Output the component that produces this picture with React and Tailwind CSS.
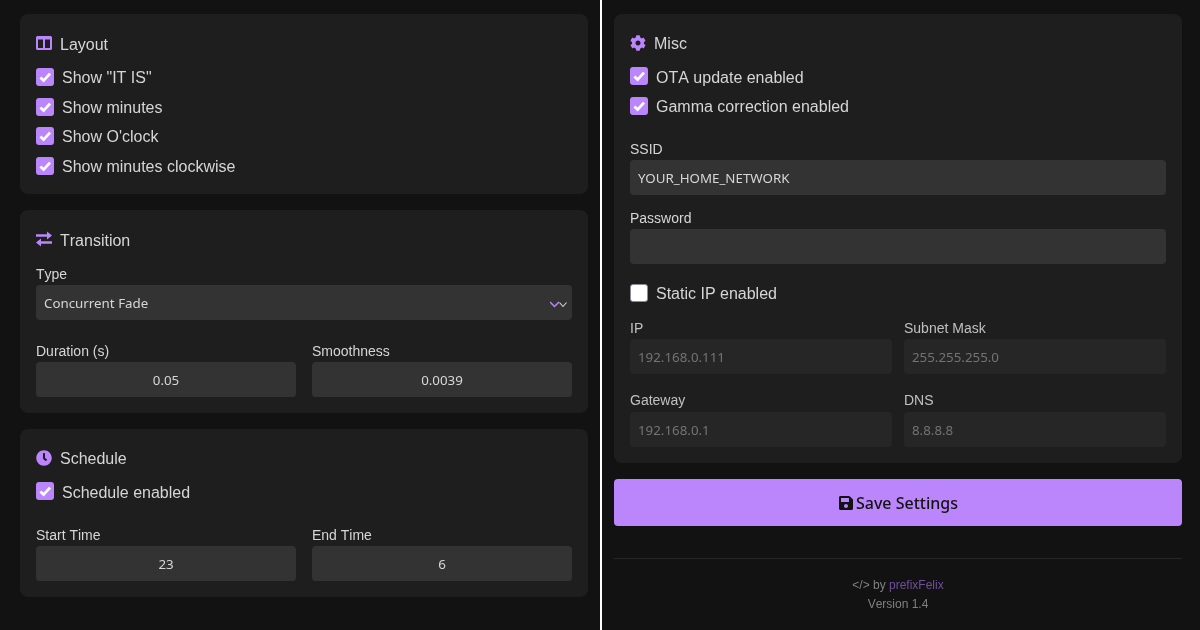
import { FaClock, FaCog, FaSave } from "react-icons/fa";

const LayoutIcon = () => (
  <svg width="16" height="14" viewBox="0 0 16 14" fill="currentColor" className="-mt-[2px]">
    <path
      fillRule="evenodd"
      d="M1.500 0h13A1.500 1.500 0 0 1 16 1.500v11a1.500 1.500 0 0 1-1.500 1.500h-13A1.500 1.500 0 0 1 0 12.500v-11A1.500 1.500 0 0 1 1.500 0ZM2 3.500V12h5V3.500ZM9 3.500V12h5V3.500Z"
    />
  </svg>
);

const SwapIcon = () => (
  <svg width="16" height="16" viewBox="0 0 16 16" fill="currentColor" className="-mt-[2px]">
    <path d="M0 3.200h11V0.400L16 4.500l-5 4.100V5.800H0ZM16 10.200H5V7.400L0 11.500l5 4.100v-2.800h11Z" />
  </svg>
);

const Checkbox = ({ checked = true, label, className = "" }) => (
  <label className={`flex items-center h-[18px] ${className}`}>
    <span
      className={`w-[18px] h-[18px] rounded-[3px] flex items-center justify-center shrink-0 ${
        checked ? "bg-[#bb86fc]" : "bg-white border border-[#8f8a99]"
      }`}
    >
      {checked && (
        <svg width="18" height="18" viewBox="0 0 18 18" fill="none" className="shrink-0">
          <path d="M4.400 9.600 7.600 12.600 14 5.600" stroke="#fff" strokeWidth="2.800" />
        </svg>
      )}
    </span>
    <span className="ml-2 pt-[2.5px] text-base text-[#d6d6d6]">{label}</span>
  </label>
);

const Title = ({ icon, children, className = "" }) => (
  <div className={`flex items-center h-7 text-base text-[#d6d6d6] ${className}`}>
    <span className="w-4 flex justify-center text-[#bb86fc]">{icon}</span>
    <span className="ml-2 pt-[2px]">{children}</span>
  </div>
);

const Field = ({ label, value, center, disabled, className = "", labelClass = "mb-[2px]" }) => (
  <div className={className}>
    <div
      className={`h-[18px] text-sm leading-[18px] ${labelClass} ${
        disabled ? "text-[#c0c0c0]" : "text-[#d6d6d6]"
      }`}
    >
      {label}
    </div>
    <input
      readOnly
      value={value}
      className={`block w-full h-[35px] px-2 rounded-[4px] text-[13.33px] font-['Noto_Sans',sans-serif] [font-kerning:normal] outline-none ${
        center ? "text-center pt-[1px]" : "pt-[2px]"
      } ${disabled ? "bg-[#262626] text-[#737373]" : "bg-[#333333] text-[#d6d6d6]"}`}
    />
  </div>
);

const Card = ({ children }) => (
  <section className="bg-[#1e1e1e] rounded-lg px-4 pb-4 pt-4 mb-4 [will-change:transform]">{children}</section>
);

export default function App() {
  return (
    <div className="w-[1200px] h-[630px] overflow-hidden flex bg-[#121212] font-['Liberation_Sans',sans-serif] [font-kerning:none]">
      <div className="w-[600px] pl-5 pr-3 pt-[14px]">
        <Card>
          <Title icon={<LayoutIcon />}>Layout</Title>
          <div className="mt-[10px] flex flex-col gap-[11.6px] pb-[3px]">
            <Checkbox label={'Show "IT IS"'} />
            <Checkbox label="Show minutes" />
            <Checkbox label="Show O'clock" />
            <Checkbox label="Show minutes clockwise" />
          </div>
        </Card>

        <Card>
          <Title icon={<SwapIcon />}>Transition</Title>
          <div className="mt-[11px]">
            <div className="h-[18px] mb-[2px] text-sm leading-[18px] text-[#d6d6d6]">Type</div>
            <div className="h-[35px] px-2 rounded-[4px] bg-[#333333] flex items-center justify-between text-[13.33px] text-[#d6d6d6] font-['Noto_Sans',sans-serif] [font-kerning:normal]">
              <span className="pt-[3px]">Concurrent Fade</span>
              <svg width="17" height="7" viewBox="0 0 17 7" fill="none" className="-mr-[3px] mt-[3px]">
                <path d="M9.500 1.500 13 5.500l3.500-4" stroke="#d6d6d6" strokeWidth="1.100" />
                <path d="M0 1 4.500 5.500 9 1" stroke="#bb86fc" strokeWidth="1.500" />
              </svg>
            </div>
          </div>
          <div className="mt-[22px] grid grid-cols-2 gap-4">
            <Field label="Duration (s)" value="0.05" center />
            <Field label="Smoothness" value="0.0039" center />
          </div>
        </Card>

        <Card>
          <Title icon={<FaClock size={16} />} className="-mt-[1px] mb-[1px]">Schedule</Title>
          <Checkbox label="Schedule enabled" className="mt-[10.4px]" />
          <div className="mt-[25.6px] grid grid-cols-2 gap-4">
            <Field label="Start Time" value="23" center />
            <Field label="End Time" value="6" center />
          </div>
        </Card>
      </div>

      <div className="w-[2px] h-full bg-white" />

      <div className="w-[598px] pl-3 pr-[18px] pt-[14px]">
        <Card>
          <Title icon={<FaCog size={16} />} className="-mt-[1px]">Misc</Title>
          <div className="mt-[10.4px] flex flex-col gap-[11.6px]">
            <Checkbox label="OTA update enabled" />
            <Checkbox label="Gamma correction enabled" />
          </div>
          <Field label="SSID" value="YOUR_HOME_NETWORK" className="mt-[24.6px]" />
          <Field label="Password" value="" className="mt-[14px]" />
          <Checkbox checked={false} label="Static IP enabled" className="mt-5" />
          <div className="mt-[17px] grid grid-cols-2 gap-x-3 gap-y-[17px]">
            <Field label="IP" value="192.168.0.111" disabled />
            <Field label="Subnet Mask" value="255.255.255.0" disabled />
            <Field label="Gateway" value="192.168.0.1" disabled labelClass="mb-[3px]" />
            <Field label="DNS" value="8.8.8.8" disabled labelClass="mb-[3px]" />
          </div>
        </Card>

        <button className="w-full h-[47px] rounded-[4px] bg-[#bb86fc] text-[#121212] flex items-center justify-center gap-[2px] text-base font-medium font-['Noto_Sans',sans-serif] [font-kerning:normal] [will-change:transform]">
          <FaSave size={16} />
          Save Settings
        </button>

        <footer className="mt-8 border-t border-[#262626] pt-[19px] text-center text-xs text-[#808080] [will-change:transform]">
          <div className="h-[19px] leading-[14px]">
            &lt;/&gt; by <span className="text-[#6f4f9c]">prefixFelix</span>
          </div>
          <div className="leading-[14px]">Version 1.4</div>
        </footer>
      </div>
    </div>
  );
}
